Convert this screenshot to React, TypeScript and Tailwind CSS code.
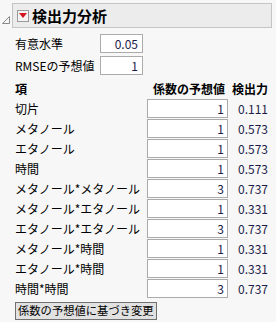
import React from "react";

const rows: [string, string, string][] = [
  ["切片", "1", "0.111"],
  ["メタノール", "1", "0.573"],
  ["エタノール", "1", "0.573"],
  ["時間", "1", "0.573"],
  ["メタノール*メタノール", "3", "0.737"],
  ["メタノール*エタノール", "1", "0.331"],
  ["エタノール*エタノール", "3", "0.737"],
  ["メタノール*時間", "1", "0.331"],
  ["エタノール*時間", "1", "0.331"],
  ["時間*時間", "3", "0.737"],
];

export default function App() {
  return (
    <div
      className="w-[276px] h-[322px] bg-[#f7f7f7] text-[12px] text-black overflow-hidden"
      style={{ fontFamily: '"Noto Sans CJK JP", "Noto Sans", sans-serif' }}
    >
      {/* header */}
      <div className="flex items-center pt-[3px]">
        <svg width="12" height="24" viewBox="0 0 12 24" className="shrink-0">
          <polygon points="2.5,19.5 9.5,19.5 9.5,12.5" fill="none" stroke="#8a8a8a" strokeWidth="1" />
        </svg>
        <div className="flex items-center h-[25px] w-[260px] bg-[#ececec] border border-[#c4c4c4] pl-[4px]">
          <div className="w-[12px] h-[12px] border border-[#9a9a9a] bg-[#f4f4f4] flex items-center justify-center">
            <svg width="8" height="6" viewBox="0 0 8 6">
              <polygon points="0,0 8,0 4,5" fill="#d4161c" />
            </svg>
          </div>
          <span className="ml-[3px] text-[15px] font-bold leading-none text-black">検出力分析</span>
        </div>
      </div>

      {/* params */}
      <div className="pl-[15px] mt-[6px] flex flex-col gap-[3px]">
        <div className="flex items-center h-[19px]">
          <span className="w-[85px] leading-none">有意水準</span>
          <div className="w-[43px] h-[19px] bg-white border border-[#ababab] flex items-center justify-end pr-[4px] text-[#1c1c4a] leading-none">
            0.05
          </div>
        </div>
        <div className="flex items-center h-[19px]">
          <span className="w-[85px] leading-none">RMSEの予想値</span>
          <div className="w-[43px] h-[19px] bg-white border border-[#ababab] flex items-center justify-end pr-[4px] text-[#1c1c4a] leading-none">
            1
          </div>
        </div>
      </div>

      {/* table */}
      <div className="pl-[15px] mt-[3px]">
        <div className="flex items-center h-[21px] font-bold">
          <span className="w-[132px]">項</span>
          <span className="w-[81px] text-right pr-[3px]">係数の予想値</span>
          <span className="w-[40px] text-right">検出力</span>
        </div>
        <div className="flex flex-col gap-[1px]">
          {rows.map(([label, v, p]) => (
            <div key={label} className="flex items-center h-[19px]">
              <span className="w-[132px] whitespace-nowrap leading-none">{label}</span>
              <div className="w-[81px] h-[19px] bg-white border border-[#ababab] flex items-center justify-end pr-[3px] text-[#1c1c4a] leading-none">
                {v}
              </div>
              <span className="w-[40px] text-right text-[#1c1c4a] leading-none">{p}</span>
            </div>
          ))}
        </div>
        <button className="mt-[4px] h-[18px] px-[2px] bg-[#e1e1e1] border border-[#707070] text-[11.3px] leading-none flex items-center">
          係数の予想値に基づき変更
        </button>
      </div>
    </div>
  );
}
